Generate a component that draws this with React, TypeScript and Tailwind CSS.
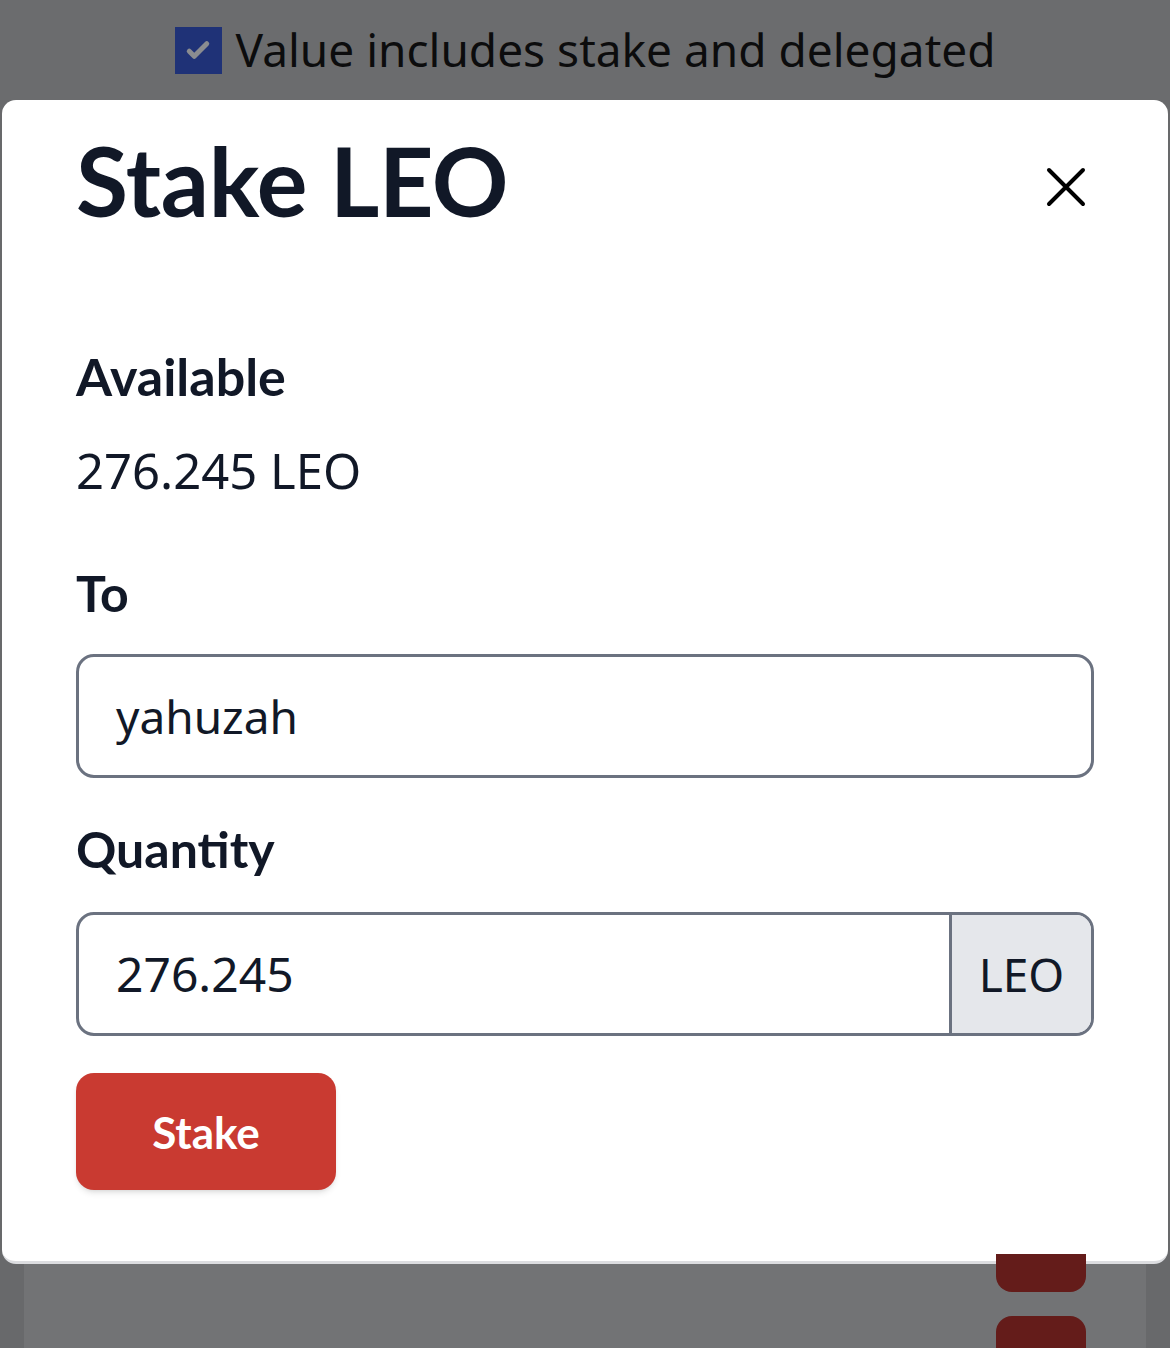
// Stake modal shown on top of the dimmed wallet page

const heading = { fontFamily: "Lato, 'Noto Sans', sans-serif" };
const body = { fontFamily: "'Noto Sans', 'Open Sans', sans-serif" };

export default function App() {
  return (
    <div className="w-[1170px] h-[1348px] overflow-hidden bg-[#68696b] flex flex-col" style={body}>
      {/* Dimmed page header */}
      <div className="h-[100px] shrink-0 flex items-center justify-center gap-[14px] bg-[#6b6c6e]">
        <span className="w-[47px] h-[47px] bg-[#1f3277] flex items-center justify-center">
          <svg viewBox="0 0 24 24" className="w-[30px] h-[30px]" fill="none" stroke="#8a8c90" strokeWidth="4" strokeLinecap="round" strokeLinejoin="round">
            <path d="M5 13l4 4 10-10" />
          </svg>
        </span>
        <span className="text-[46px] leading-none text-[#0c0c0d] pb-[2px]">Value includes stake and delegated</span>
      </div>

      {/* Modal */}
      <div className="mx-[2px] h-[1164px] shrink-0 bg-white rounded-[14px] border-b-[3px] border-[#dcdde0] px-[74px] pt-[26px] flex flex-col">
        <div className="flex items-start justify-between">
          <h1 className="text-[95px] font-bold leading-[1.15] text-[#111827] tracking-[-0.3px]" style={heading}>
            Stake LEO
          </h1>
          <button className="mt-[41px] mr-[8px] text-black">
            <svg viewBox="0 0 40 40" className="w-[40px] h-[40px]" fill="none" stroke="currentColor" strokeWidth="4" strokeLinecap="round">
              <path d="M3 3l34 34M37 3L3 37" />
            </svg>
          </button>
        </div>

        <h2 className="mt-[115px] text-[52px] font-bold leading-none text-[#111827]" style={heading}>Available</h2>
        <p className="mt-[44px] text-[49px] leading-none text-[#111827]">276.245 LEO</p>

        <h2 className="mt-[73px] text-[50px] font-bold leading-none text-[#111827]" style={heading}>To</h2>
        <div className="mt-[36px] w-[1018px] h-[124px] border-[3px] border-[#6b7280] rounded-[18px] flex items-center px-[37px]">
          <span className="text-[46px] text-[#111827]">yahuzah</span>
        </div>

        <h2 className="mt-[46px] text-[50px] font-bold leading-none text-[#111827]" style={heading}>Quantity</h2>
        <div className="mt-[38px] w-[1018px] h-[124px] border-[3px] border-[#6b7280] rounded-[18px] flex overflow-hidden">
          <div className="flex-1 flex items-center px-[37px]">
            <span className="text-[48px] text-[#111827]">276.245</span>
          </div>
          <div className="w-[142px] bg-[#e5e7eb] border-l-[3px] border-[#6b7280] flex items-center justify-center">
            <span className="text-[46px] text-[#111827]">LEO</span>
          </div>
        </div>

        <button
          className="mt-[37px] w-[260px] h-[117px] rounded-[18px] bg-[#c93a31] text-white text-[44px] font-bold shadow-md"
          style={heading}
        >
          Stake
        </button>
      </div>

      {/* Dimmed page below */}
      <div className="flex-1 mx-[24px] bg-[#727375] relative">
        <div className="absolute right-[60px] -top-[10px] w-[90px] h-[38px] rounded-b-[16px] bg-[#641c1a]" />
        <div className="absolute right-[60px] top-[52px] w-[90px] h-[60px] rounded-t-[16px] bg-[#641c1a]" />
      </div>
    </div>
  );
}
